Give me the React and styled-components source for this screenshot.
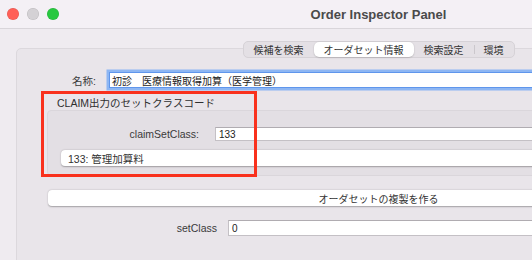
import React from "react";
import styled, { createGlobalStyle } from "styled-components";

const GlobalStyle = createGlobalStyle`
  html, body {
    margin: 0;
    padding: 0;
    overflow: hidden;
    background: #efebf0;
  }
  body {
    font-family: "Liberation Sans", "Noto Sans CJK JP", sans-serif;
    font-size: 10.5px;
    color: #333;
  }
`;

const Window = styled.div`
  position: relative;
  width: 757px;
  height: 260px;
  background: #efebf0;
`;

const TitleBar = styled.div`
  display: grid;
  grid-template-columns: 1fr auto 1fr;
  align-items: center;
  height: 28px;
  background: #f4f0f5;
  border-bottom: 1px solid #d9d5da;
`;

const Lights = styled.div`
  display: flex;
  gap: 8px;
  padding-left: 7px;
`;

const Light = styled.span`
  width: 12px;
  height: 12px;
  border-radius: 50%;
  background: ${(p) => p.$color};
  box-shadow: inset 0 0 0 0.5px rgba(0, 0, 0, 0.12);
`;

const Title = styled.div`
  font-size: 13px;
  font-weight: 700;
  color: #4a4a4a;
`;

const Body = styled.div`
  padding: 12px 16px 0 16px;
`;

const TabRow = styled.div`
  position: relative;
  z-index: 1;
  display: flex;
  justify-content: center;
  margin-bottom: -10px;
`;

const Segmented = styled.div`
  display: flex;
  align-items: stretch;
  height: 15px;
  padding: 0;
  border: 1px solid #d6d2d7;
  border-radius: 5px;
  background: #e4e0e5;
`;

const Tab = styled.div`
  position: relative;
  display: flex;
  align-items: center;
  padding: 0 10px;
  font-size: 10px;
  color: #333;
  border-radius: 5px;
  background: ${(p) => (p.$active ? "#fff" : "transparent")};
  box-shadow: ${(p) => (p.$active ? "0 0.5px 1.5px rgba(0,0,0,0.25)" : "none")};
  &::before {
    content: "";
    display: ${(p) => (p.$divider ? "block" : "none")};
    position: absolute;
    left: 0;
    top: 3px;
    bottom: 3px;
    width: 1px;
    background: #cbc7cc;
  }
`;

const Box = styled.div`
  height: 230px;
  padding: 20px 30px 0 30px;
  background: #e9e5ea;
  border: 1px solid #dcd8dd;
  border-radius: 5px;
`;

const Row = styled.div`
  display: flex;
  align-items: center;
  height: ${(p) => p.$h || 16}px;
  margin-top: ${(p) => p.$mt || 0}px;
`;

const Label = styled.div`
  width: ${(p) => p.$w}px;
  margin-right: ${(p) => p.$gap}px;
  text-align: right;
  color: #3a3a3a;
  flex-shrink: 0;
`;

const Field = styled.div`
  flex: 1;
  height: ${(p) => p.$h || 16}px;
  box-sizing: border-box;
  display: flex;
  align-items: center;
  padding-left: 3px;
  margin-right: ${(p) => p.$mr || 0}px;
  background: #fff;
  border: 1px solid #c4c0c5;
  border-top-color: #b0acb1;
  font-size: ${(p) => p.$fs || 10.5}px;
  color: #222;
`;

const FocusField = styled(Field)`
  border: 1px solid #5f96ec;
  box-shadow: 0 0 0 2.5px #8db6f3;
  padding-left: 2px;
`;

const GroupTitle = styled.div`
  padding: 5px 0 0 10px;
  line-height: 14px;
  color: #2f2f2f;
`;

const Group = styled.div`
  padding: 16px 13px 9px 0;
  background: #e3dfe4;
  border: 1px solid #dad6db;
  border-radius: 4px;
`;

const Popup = styled.div`
  display: flex;
  align-items: center;
  height: 16px;
  margin: 9px 0 0 13px;
  padding-left: 7px;
  background: #fff;
  border-radius: 4px;
  box-shadow: 0 0.5px 1.5px rgba(0, 0, 0, 0.3);
  color: #333;
`;

const Button = styled.div`
  display: flex;
  align-items: center;
  justify-content: center;
  height: 16px;
  margin: 14px 1px 0 1px;
  background: #fff;
  border-radius: 4px;
  box-shadow: 0 0.5px 1.5px rgba(0, 0, 0, 0.3);
  font-size: 10px;
  color: #333;
`;

const Highlight = styled.div`
  position: absolute;
  left: 41px;
  top: 91px;
  width: 216px;
  height: 86px;
  box-sizing: border-box;
  border: 3px solid #f9311d;
  pointer-events: none;
`;

const tabs = [
  { label: "候補を検索" },
  { label: "オーダセット情報", active: true },
  { label: "検索設定" },
  { label: "環境", divider: true },
];

export default function App() {
  return (
    <>
      <GlobalStyle />
      <Window>
        <TitleBar>
          <Lights>
            <Light $color="#ff5f57" />
            <Light $color="#d4d1d5" />
            <Light $color="#28c840" />
          </Lights>
          <Title>Order Inspector Panel</Title>
          <div />
        </TitleBar>
        <Body>
          <TabRow>
            <Segmented>
              {tabs.map((t) => (
                <Tab key={t.label} $active={t.active} $divider={t.divider}>
                  {t.label}
                </Tab>
              ))}
            </Segmented>
          </TabRow>
          <Box>
            <Row $h={22}>
              <Label $w={49} $gap={13}>名称:</Label>
              <FocusField $fs={10}>初診　医療情報取得加算（医学管理）</FocusField>
            </Row>
            <GroupTitle>CLAIM出力のセットクラスコード</GroupTitle>
            <Group>
              <Row $h={14}>
                <Label $w={151} $gap={16}>claimSetClass:</Label>
                <Field $h={14} $fs={10}>133</Field>
              </Row>
              <Popup>133: 管理加算料</Popup>
            </Group>
            <Button>オーダセットの複製を作る</Button>
            <Row $mt={14}>
              <Label $w={170} $gap={11}>setClass</Label>
              <Field $fs={10} $mr={20}>0</Field>
            </Row>
          </Box>
        </Body>
        <Highlight />
      </Window>
    </>
  );
}
